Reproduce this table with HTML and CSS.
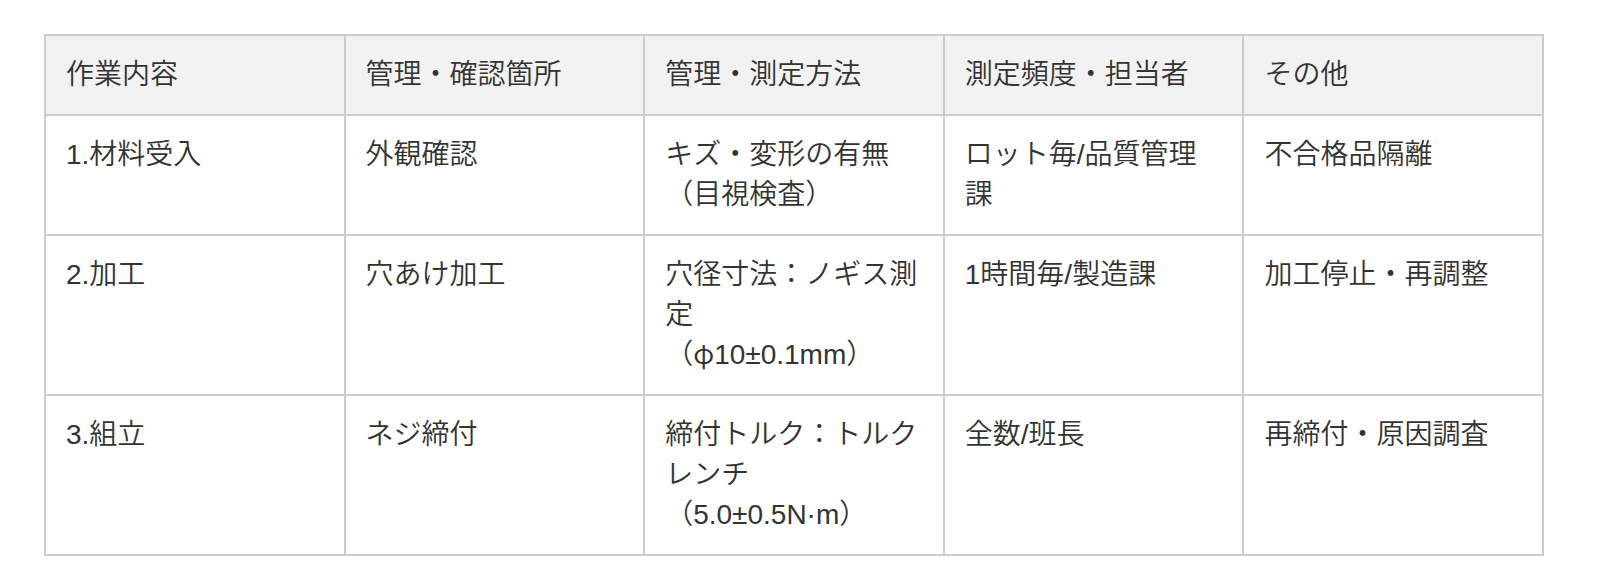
FILE: index.html
```html
<!DOCTYPE html>
<html lang="ja">
<head>
<meta charset="utf-8">
<title>作業管理表</title>
<link rel="stylesheet" href="styles.css">
</head>
<body>
<table class="qc-table">
  <thead>
    <tr>
      <th>作業内容</th>
      <th>管理・確認箇所</th>
      <th>管理・測定方法</th>
      <th>測定頻度・担当者</th>
      <th>その他</th>
    </tr>
  </thead>
  <tbody>
    <tr>
      <td>1.材料受入</td>
      <td>外観確認</td>
      <td>キズ・変形の有無<br>（目視検査）</td>
      <td>ロット毎/品質管理課</td>
      <td>不合格品隔離</td>
    </tr>
    <tr>
      <td>2.加工</td>
      <td>穴あけ加工</td>
      <td>穴径寸法：ノギス測定<br>（<span class="greek">φ</span>10±0.1mm）</td>
      <td>1時間毎/製造課</td>
      <td>加工停止・再調整</td>
    </tr>
    <tr>
      <td>3.組立</td>
      <td>ネジ締付</td>
      <td>締付トルク：トルクレンチ<br>（5.0±0.5N·m）</td>
      <td>全数/班長</td>
      <td>再締付・原因調査</td>
    </tr>
  </tbody>
</table>
</body>
</html>
```

FILE: styles.css
```css
html, body {
  margin: 0;
  padding: 0;
  background: #ffffff;
}

body {
  padding: 34px 0 0 44px;
  font-family: "Liberation Sans", "Noto Sans CJK JP", sans-serif;
  color: #333333;
}

.qc-table {
  border-collapse: collapse;
  width: 1500px;
  table-layout: fixed;
  font-size: 28px;
  line-height: 40px;
}

.qc-table th,
.qc-table td {
  border: 2px solid #cccccc;
  padding: 19px 20px;
  text-align: left;
  vertical-align: top;
  font-weight: 350;
}

.qc-table th {
  background: #f2f2f2;
}

.greek {
  font-family: "Noto Sans CJK JP", sans-serif;
  line-height: 0;
}
```
